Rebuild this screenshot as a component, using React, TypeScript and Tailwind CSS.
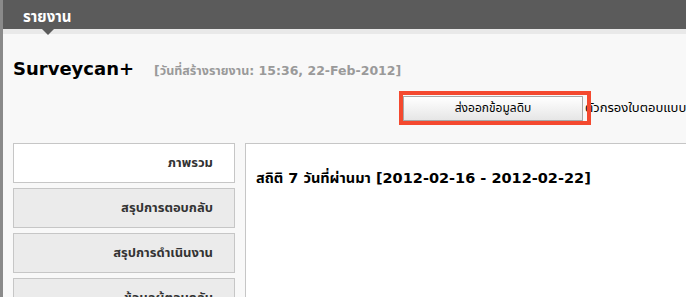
import React from "react";

// Left menu entries of the report page
const menuItems = [
  { label: "ภาพรวม", active: true },
  { label: "สรุปการตอบกลับ", active: false },
  { label: "สรุปการดำเนินงาน", active: false },
  { label: "ข้อมูลผู้ตอบกลับ", active: false },
];

const font = "font-['DejaVu_Sans','Noto_Sans_Thai','Noto_Sans',sans-serif]";

export default function App() {
  return (
    <div
      className={`h-[297px] w-[686px] overflow-hidden border-l-[3px] border-[#8a8a8a] bg-[#f8f8f8] ${font}`}
    >
      {/* Top tab bar */}
      <div className="relative h-[29px] bg-[#5b5b5b] pl-[20px] pt-[5px]">
        <span className="text-[15px] font-bold leading-[18px] text-white">
          รายงาน
        </span>
        <span className="absolute left-[39px] top-[29px] h-0 w-0 border-x-[6px] border-t-[6px] border-x-transparent border-t-[#5b5b5b]" />
      </div>
      <div className="h-[5px] bg-[#e9e9e9]" />

      {/* Title row */}
      <div className="flex items-baseline gap-[20px] whitespace-nowrap pl-[10px] pt-[23px]">
        <span className="text-[18px] font-bold leading-[24px] text-black">
          Surveycan+
        </span>
        <span className="text-[12.5px] font-bold text-[#9a9a9a]">
          [วันที่สร้างรายงาน: 15:36, 22-Feb-2012]
        </span>
      </div>

      {/* Export button row */}
      <div className="mt-[14px] flex items-center whitespace-nowrap pl-[400px]">
        <div className="relative">
          <button className="h-[25px] w-[180px] border border-[#a8a8a8] bg-gradient-to-b from-white to-[#e6e6e6] text-[12px] text-black">
            ส่งออกข้อมูลดิบ
          </button>
          <span className="absolute -bottom-[4px] -left-[4px] -right-[8px] -top-[4px] border-4 border-[#f4492f]" />
        </div>
        <span className="ml-[2px] text-[13px] text-black">
          ตัวกรองใบตอบแบบสอบถาม
        </span>
      </div>

      {/* Sidebar + content */}
      <div className="mt-[22px] flex gap-[10px] pl-[10px]">
        <div className="flex w-[222px] shrink-0 flex-col gap-[5px]">
          {menuItems.map((item) => (
            <div
              key={item.label}
              className={`flex h-[40px] items-center justify-end border border-[#c6c6c6] pr-[21px] text-[13px] font-bold text-[#333] ${
                item.active ? "bg-white" : "bg-[#ebebeb]"
              }`}
            >
              {item.label}
            </div>
          ))}
        </div>
        <div className="h-[200px] flex-1 border border-r-0 border-[#c6c6c6] bg-white pl-[10px] pt-[24px]">
          <div className="whitespace-nowrap text-[14.5px] font-bold text-black">
            สถิติ 7 วันที่ผ่านมา [2012-02-16 - 2012-02-22]
          </div>
        </div>
      </div>
    </div>
  );
}
